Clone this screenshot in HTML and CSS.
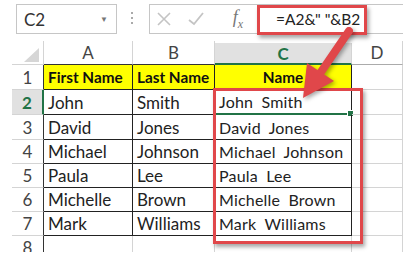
FILE: index.html
```html
<!DOCTYPE html>
<html lang="en">
<head>
    <title>Concatenate Names</title>
    <link rel="stylesheet" href="styles.css">
</head>
<body>
    <div class="sheet">
        <!-- Name box and formula bar -->
        <div class="toolbar">
            <div class="namebox">
                <span>C2</span>
                <span class="caret">&#9660;</span>
            </div>
            <div class="dots"><i></i><i></i><i></i></div>
            <div class="formulabar">
                <span class="fbtn">
                    <svg width="14" height="14" viewBox="0 0 14 14"><path d="M1 1L13 13M13 1L1 13" stroke="#c4c4c4" stroke-width="1.6" fill="none"/></svg>
                </span>
                <span class="fbtn">
                    <svg width="16" height="14" viewBox="0 0 16 14"><path d="M1 8L6 12L15 1" stroke="#c4c4c4" stroke-width="1.8" fill="none"/></svg>
                </span>
                <span class="fx">f<sub>x</sub></span>
                <span class="formula">=A2&amp;" "&amp;B2</span>
            </div>
        </div>

        <!-- Worksheet grid -->
        <div class="grid">
            <div class="gap"></div><div class="corner"><span></span></div>
            <div class="colhead dark">A</div><div class="colhead dark">B</div><div class="colhead active">C</div><div class="colhead">D</div>

            <div class="gap"></div><div class="rowhead">1</div>
            <div class="cell data head">First Name</div><div class="cell data head">Last Name</div><div class="cell data head center">Name</div><div class="cell"></div>

            <div class="gap"></div><div class="rowhead active">2</div>
            <div class="cell data">John</div><div class="cell data">Smith</div><div class="cell data joined selected">John Smith<span class="handle"></span></div><div class="cell"></div>

            <div class="gap"></div><div class="rowhead">3</div>
            <div class="cell data">David</div><div class="cell data">Jones</div><div class="cell data joined">David Jones</div><div class="cell"></div>

            <div class="gap"></div><div class="rowhead">4</div>
            <div class="cell data">Michael</div><div class="cell data">Johnson</div><div class="cell data joined">Michael Johnson</div><div class="cell"></div>

            <div class="gap"></div><div class="rowhead">5</div>
            <div class="cell data">Paula</div><div class="cell data">Lee</div><div class="cell data joined">Paula Lee</div><div class="cell"></div>

            <div class="gap"></div><div class="rowhead">6</div>
            <div class="cell data">Michelle</div><div class="cell data">Brown</div><div class="cell data joined">Michelle Brown</div><div class="cell"></div>

            <div class="gap"></div><div class="rowhead">7</div>
            <div class="cell data">Mark</div><div class="cell data">Williams</div><div class="cell data joined">Mark Williams</div><div class="cell"></div>

            <div class="gap"></div><div class="rowhead">8</div>
            <div class="cell"></div><div class="cell"></div><div class="cell"></div><div class="cell"></div>
        </div>

        <!-- Callouts drawn over the sheet -->
        <div class="mark mark-formula"></div>
        <div class="mark mark-column"></div>
        <svg class="arrow" width="416" height="261" viewBox="0 0 416 261">
            <line x1="349" y1="31" x2="321" y2="72" stroke="#e0474a" stroke-width="8" stroke-linecap="round"/>
            <polygon points="303,98 307,63 334,81" fill="#e0474a"/>
        </svg>
    </div>
</body>
</html>
```

FILE: styles.css
```css
/* Page frame */
body {
    margin: 0;
    background-color: white;
    font-family: Lato, 'Noto Sans', sans-serif;
    color: #222;
}

.sheet {
    position: relative;
    width: 403px;
    height: 252px;
    overflow: hidden;
}

/* Name box + formula bar */
.toolbar {
    display: flex;
    align-items: flex-start;
    height: 41px;
}

.namebox {
    display: flex;
    align-items: center;
    justify-content: space-between;
    box-sizing: border-box;
    width: 101px;
    height: 30px;
    margin: 4px 0 0 16px;
    padding: 0 8px 0 7px;
    border: 1px solid #c6c6c6;
    font-size: 17px;
    color: #333;
}

.caret {
    font-size: 8px;
    color: #777;
}

.dots {
    display: flex;
    flex-direction: column;
    gap: 3px;
    margin: 12px 0 0 14px;
    width: 18px;
}

.dots i {
    width: 2px;
    height: 2px;
    background-color: #aaa;
}

.formulabar {
    display: flex;
    align-items: center;
    flex: 1;
    box-sizing: border-box;
    height: 30px;
    margin-top: 4px;
    border: 1px solid #c6c6c6;
    border-right: none;
}

.fbtn {
    display: flex;
    justify-content: center;
    width: 36px;
}

.fbtn:first-child {
    width: 28px;
}

.fx {
    width: 48px;
    text-align: center;
    font-family: 'Liberation Serif', serif;
    font-style: italic;
    font-size: 18px;
    color: #777;
}

.fx sub {
    font-size: 12px;
}

.formula {
    margin-left: 14px;
    font-size: 15.5px;
    color: #222;
}

/* Worksheet */
.grid {
    display: grid;
    grid-template-columns: 12px 32px 89px 82px 137px 51px;
    grid-template-rows: 24px 25px 25px 25px 24px 24px 24px 24px 24px;
    font-size: 17px;
}

.corner {
    position: relative;
    border-right: 1px solid #d4d4d4;
    border-bottom: 1px solid #d4d4d4;
}

.corner span {
    position: absolute;
    right: 4px;
    bottom: 2px;
    width: 0;
    height: 0;
    border-left: 15px solid transparent;
    border-bottom: 14px solid #d6d6d6;
}

.colhead {
    display: flex;
    align-items: center;
    justify-content: center;
    border-right: 1px solid #d4d4d4;
    border-bottom: 1px solid #ababab;
    color: #444;
}

.colhead.dark {
    border-bottom-color: #333;
}

.colhead.active {
    margin-top: 2px;
    background-color: #e1e1e1;
    border-bottom: 2px solid #217346;
    color: #217346;
    font-weight: bold;
}

.rowhead {
    display: flex;
    align-items: center;
    justify-content: center;
    border-right: 1px solid #333;
    border-bottom: 1px solid #d4d4d4;
    color: #444;
}

.rowhead:nth-last-child(6) {
    border-right-color: #d4d4d4;
}

.rowhead.active {
    background-color: #e1e1e1;
    border-right: 2px solid #217346;
    color: #217346;
    font-weight: bold;
}

.cell {
    position: relative;
    display: flex;
    align-items: center;
    padding-left: 4px;
    border-right: 1px solid #d4d4d4;
    border-bottom: 1px solid #d4d4d4;
    white-space: nowrap;
}

.cell.data {
    border-right-color: #222;
    border-bottom-color: #222;
}

.cell.head {
    background-color: #ffff00;
    font-weight: bold;
    font-size: 15.3px;
    color: #111;
    padding-left: 4px;
}

.cell.center {
    justify-content: center;
    padding-left: 0;
}

.cell.joined {
    font-size: 16px;
    word-spacing: 4px;
    letter-spacing: 0.2px;
}

.cell.selected {
    border-bottom: 2px solid #217346;
}

.handle {
    position: absolute;
    right: -3px;
    bottom: -4px;
    width: 5px;
    height: 5px;
    background-color: #217346;
    border: 1px solid white;
}

/* Red call-outs */
.mark {
    position: absolute;
    border: 3px solid #e0474a;
    box-shadow: 2px 3px 4px rgba(0, 0, 0, 0.35);
}

.mark-formula {
    left: 257px;
    top: 5px;
    width: 104px;
    height: 24px;
}

.mark-column {
    left: 213px;
    top: 88px;
    width: 144px;
    height: 150px;
}

.arrow {
    position: absolute;
    left: 0;
    top: 0;
    filter: drop-shadow(2px 2px 2px rgba(0, 0, 0, 0.35));
}
```
